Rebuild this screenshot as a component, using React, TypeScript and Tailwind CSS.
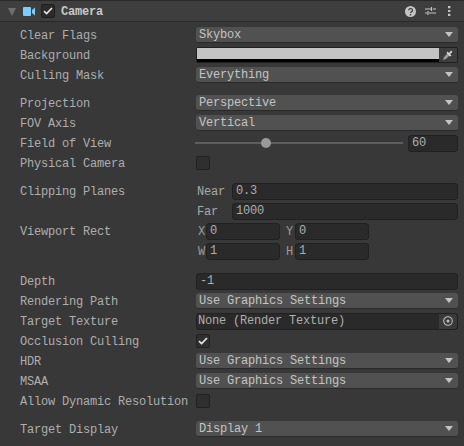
import type { ReactNode } from 'react'

const mono = { fontFamily: '"Liberation Mono", monospace' }

function Row({ label, children, className = '' }: { label?: string; children?: ReactNode; className?: string }) {
  return (
    <div className={`flex h-4 items-center ${className}`}>
      <div className="w-[196px] shrink-0 whitespace-nowrap pl-5 pt-[2px] text-[#aeaeae]">{label}</div>
      <div className="flex h-4 min-w-0 flex-1 items-center">{children}</div>
    </div>
  )
}

function Select({ value }: { value: string }) {
  return (
    <div className="flex h-4 w-full items-center justify-between rounded-[3px] border-b border-[#2a2a2a] bg-[#515151] pl-[3px] pr-[5px] text-[#c4c4c4]">
      <span>{value}</span>
      <svg width="8" height="5" viewBox="0 0 8 5">
        <path d="M0 0h8L4 5z" fill="#c4c4c4" />
      </svg>
    </div>
  )
}

function Field({ value, className = 'w-full' }: { value: string; className?: string }) {
  return (
    <div className={`flex h-[17px] items-center rounded-[3px] border border-[#212121] bg-[#2a2a2a] pl-[3px] text-[#aeaeae] ${className}`}>
      {value}
    </div>
  )
}

function Checkbox({ checked }: { checked?: boolean }) {
  return (
    <div className="flex h-[14px] w-[14px] items-center justify-center rounded-[2px] border border-[#212121] bg-[#2f2f2f]">
      {checked && (
        <svg width="10" height="8" viewBox="0 0 10 8">
          <path d="M1 4.2 3.6 6.6 9 1" fill="none" stroke="#e8e8e8" strokeWidth="1.7" />
        </svg>
      )}
    </div>
  )
}

function Pair({ a, av, b, bv }: { a: string; av: string; b: string; bv: string }) {
  return (
    <div className="flex items-center">
      <span className="w-[10px] shrink-0 pl-[2px] pt-[2px] text-[#9a9a9a]">{a}</span>
      <Field value={av} className="w-[74px]" />
      <span className="ml-[5px] w-[10px] shrink-0 pl-[1px] pt-[2px] text-[#9a9a9a]">{b}</span>
      <Field value={bv} className="w-[74px]" />
    </div>
  )
}

export default function App() {
  return (
    <div className="h-[446px] w-[464px] overflow-hidden bg-[#383838] text-[12px] tracking-[-0.2px]" style={mono}>
      {/* Header */}
      <div className="flex h-[22px] items-center border-y border-[#282828] bg-[#3e3e3e] pl-[7px] pr-[13px]">
        <svg width="10" height="8" viewBox="0 0 10 8" className="mt-[1px]">
          <path d="M1 0h8L5 8z" fill="#6e6e6e" />
        </svg>
        <svg width="12" height="9" viewBox="0 0 12 9" className="ml-[6px]">
          <rect x="0" y="0" width="8" height="9" rx="1" fill="#7dcdfb" />
          <path d="M9 3l3-2.5v8L9 6z" fill="#7dcdfb" />
        </svg>
        <div className="ml-[6px] flex h-[14px] w-[14px] items-center justify-center rounded-[2px] border border-[#1f1f1f] bg-[#2b2b2b]">
          <svg width="10" height="8" viewBox="0 0 10 8">
            <path d="M1 4.2 3.6 6.6 9 1" fill="none" stroke="#e8e8e8" strokeWidth="1.6" />
          </svg>
        </div>
        <span className="ml-[6px] pt-[2px] font-bold text-[#c8c8c8]">Camera</span>
        <div className="ml-auto flex items-center gap-[9px]">
          <svg width="11" height="11" viewBox="0 0 11 11">
            <circle cx="5.5" cy="5.5" r="5.5" fill="#c4c4c4" />
            <path d="M3.7 4.2a1.9 1.7 0 1 1 2.9 1.5c-.7.4-1 .7-1 1.3" fill="none" stroke="#3e3e3e" strokeWidth="1.3" />
            <rect x="4.8" y="8" width="1.4" height="1.4" fill="#3e3e3e" />
          </svg>
          <svg width="11" height="10" viewBox="0 0 11 10">
            <path d="M0 3h6M8 3h3M0 7h2M4 7h7M6.5 1v4M3 5v4" stroke="#c4c4c4" strokeWidth="1.2" fill="none" />
          </svg>
          <svg width="3" height="10" viewBox="0 0 3 10" className="ml-[3px]">
            <path d="M0 0h2.4v2.2H0zM0 3.9h2.4v2.2H0zM0 7.8h2.4V10H0z" fill="#c4c4c4" />
          </svg>
        </div>
      </div>

      {/* Body */}
      <div className="flex flex-col gap-1 pr-[6px] pt-[5px]">
        <Row label="Clear Flags"><Select value="Skybox" /></Row>
        <Row label="Background">
          <div className="flex h-4 w-full rounded-[2px] border border-[#212121] bg-[#2a2a2a]">
            <div className="flex flex-1 flex-col">
              <div className="flex-1 bg-[#c4c4c4]" />
              <div className="h-[3px] bg-black" />
            </div>
            <div className="flex w-[18px] items-center justify-center bg-[#3e3e3e]">
              <svg width="12" height="12" viewBox="0 0 12 12">
                <path d="M1 11 2 8l4-4 2 2-4 4z" fill="#9c9c9c" />
                <path d="M5.5 2.5 7 4l2-2.5 1.5 1.5L8 5l1.5 1.5L8 7.5 4.5 4z" fill="#d8d8d8" />
              </svg>
            </div>
          </div>
        </Row>
        <Row label="Culling Mask"><Select value="Everything" /></Row>

        <Row label="Projection" className="mt-2"><Select value="Perspective" /></Row>
        <Row label="FOV Axis"><Select value="Vertical" /></Row>
        <Row label="Field of View">
          <div className="relative -ml-[1px] h-[2px] w-[208px] shrink-0 bg-[#5e5e5e]">
            <div className="absolute left-[66px] top-[-4px] h-[10px] w-[10px] rounded-full bg-[#999999]" />
          </div>
          <Field value="60" className="ml-[5px] flex-1" />
        </Row>
        <Row label="Physical Camera"><Checkbox /></Row>

        <Row label="Clipping Planes" className="mt-2">
          <span className="w-[36px] shrink-0 pl-[1px] pt-[2px] text-[#a8a8a8]">Near</span>
          <Field value="0.3" className="flex-1" />
        </Row>
        <Row>
          <span className="w-[36px] shrink-0 pl-[1px] pt-[2px] text-[#a8a8a8]">Far</span>
          <Field value="1000" className="flex-1" />
        </Row>
        <Row label="Viewport Rect"><Pair a="X" av="0" b="Y" bv="0" /></Row>
        <Row><Pair a="W" av="1" b="H" bv="1" /></Row>

        <Row label="Depth" className="mt-[10px]"><Field value="-1" /></Row>
        <Row label="Rendering Path"><Select value="Use Graphics Settings" /></Row>
        <Row label="Target Texture">
          <div className="flex h-[17px] w-full items-center justify-between rounded-[3px] border border-[#212121] bg-[#2a2a2a] pl-[1px] text-[#aeaeae]">
            <span>None (Render Texture)</span>
            <div className="flex h-full w-[18px] items-center justify-center rounded-r-[3px] bg-[#3a3a3a]">
              <svg width="10" height="10" viewBox="0 0 10 10">
                <circle cx="5" cy="5" r="4.3" fill="none" stroke="#c0c0c0" strokeWidth="1.1" />
                <circle cx="5" cy="5" r="1.5" fill="#c0c0c0" />
              </svg>
            </div>
          </div>
        </Row>
        <Row label="Occlusion Culling"><Checkbox checked /></Row>
        <Row label="HDR"><Select value="Use Graphics Settings" /></Row>
        <Row label="MSAA"><Select value="Use Graphics Settings" /></Row>
        <Row label="Allow Dynamic Resolution"><Checkbox /></Row>

        <Row label="Target Display" className="mt-2"><Select value="Display 1" /></Row>
      </div>
    </div>
  )
}
